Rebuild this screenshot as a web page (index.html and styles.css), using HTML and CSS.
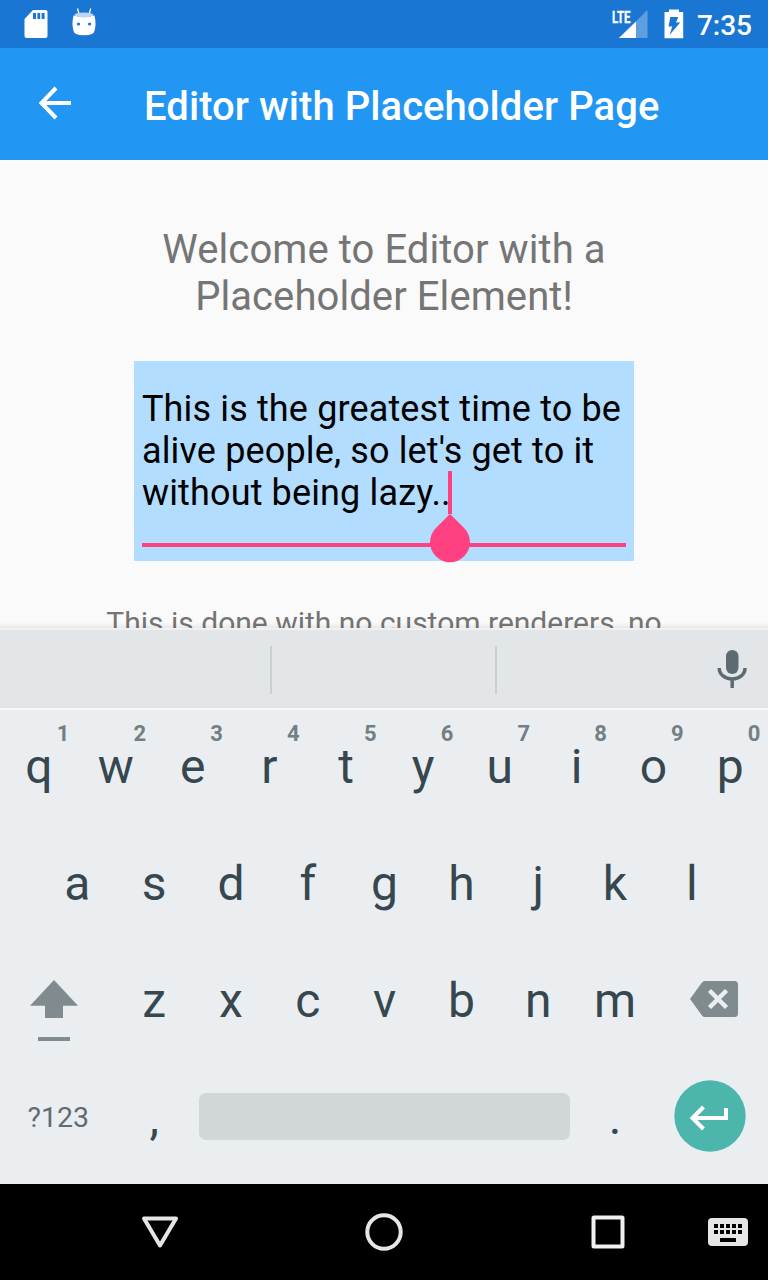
FILE: index.html
```html
<!DOCTYPE html>
<html lang="en">
<head>
<meta charset="utf-8">
<title>Editor with Placeholder Page</title>
<link rel="stylesheet" href="styles.css">
</head>
<body>
<div class="screen">
  <div class="status-bar">
    <svg class="sd-icon" width="24" height="30" viewBox="0 0 24 30"><path fill="#fff" fill-rule="evenodd" d="M9 1h12.500a2 2 0 0 1 2 2v24a2 2 0 0 1-2 2H2.500a2 2 0 0 1-2-2V10ZM9 4v6h3V4ZM13.400 4v6h2.800V4ZM17.600 4v6h3V4Z"/></svg>
    <svg class="robot-icon" width="24" height="28" viewBox="0 0 24 28"><path d="M5.500 -.5 7 5M18.700 -.5 17.200 5" stroke="#fff" stroke-width="1.300" fill="none"/><path fill="#fff" d="M1.500 6.500Q12 9 22.500 6.500Q24.500 15 22.500 22Q21.500 26.300 12 26.300T1.500 22Q-.5 15 1.500 6.500Z"/><ellipse cx="12" cy="6" rx="9.500" ry="2.500" fill="#bcd6f3"/><circle cx="6.500" cy="15" r="1.600" fill="#1976d2"/><circle cx="17.600" cy="15" r="1.600" fill="#1976d2"/></svg>
    <span class="spacer"></span>
    <svg class="signal-icon" width="36" height="30" viewBox="0 0 36 30"><path fill="#5e9fe0" d="M35.500 1v28H7Z"/><path fill="#fff" d="M24 12.500v16.500H7Z"/><text class="lte" x="0" y="13.500" textLength="18.500" lengthAdjust="spacingAndGlyphs">LTE</text></svg>
    <svg class="battery-icon" width="20" height="30" viewBox="0 0 20 30"><path fill="#fff" d="M5 .500h10V3h4.200v26.300H.5V3H5Z"/><path fill="#1976d2" d="M6.300 8h8l-2.300 5.500h4.200L5.500 26 8.300 17.500H4.500Z"/></svg>
    <span class="clock">7:35</span>
  </div>

  <div class="app-bar">
    <svg class="back-icon" width="34" height="34" viewBox="0 0 34 34"><path d="M33 17H4M18 2 3.500 17 18 32" fill="none" stroke="#fff" stroke-width="4"/></svg>
    <h1 class="title">Editor with Placeholder Page</h1>
  </div>

  <main class="content">
    <p class="welcome">Welcome to Editor with a<br>Placeholder Element!</p>
    <div class="editor">
      <p class="editor-text">This is the greatest time to be<br>alive people, so let's get to it<br>without being lazy..<span class="caret"></span></p>
      <div class="underline"></div>
      <svg class="handle" width="40" height="48" viewBox="0 0 40 48"><path fill="#ff4081" d="M20 0 34.100 14A20 20 0 1 1 5.900 14Z"/></svg>
    </div>
    <p class="note">This is done with no custom renderers, no</p>
    <div class="content-shade"></div>
  </main>

  <div class="suggestions">
    <span class="slot"></span><span class="slot slot-mid"></span>
    <span class="slot slot-mic"><svg width="30" height="40" viewBox="0 0 30 40"><rect x="9" y="0" width="12.500" height="24" rx="6.200" fill="#5c6b72"/><path d="M2.200 18C2.200 24.500 8 29 15.200 29S28 24.500 28 18M15.200 29v9" fill="none" stroke="#5c6b72" stroke-width="3.500"/></svg></span>
  </div>

  <div class="keyboard">
    <div class="row">
      <span class="key">q<i class="hint">1</i></span><span class="key">w<i class="hint">2</i></span><span class="key">e<i class="hint">3</i></span><span class="key">r<i class="hint">4</i></span><span class="key">t<i class="hint">5</i></span><span class="key">y<i class="hint">6</i></span><span class="key">u<i class="hint">7</i></span><span class="key">i<i class="hint">8</i></span><span class="key">o<i class="hint">9</i></span><span class="key">p<i class="hint">0</i></span>
    </div>
    <div class="row">
      <span class="key">a</span><span class="key">s</span><span class="key">d</span><span class="key">f</span><span class="key">g</span><span class="key">h</span><span class="key">j</span><span class="key">k</span><span class="key">l</span>
    </div>
    <div class="row">
      <span class="key wide shift"><svg width="48" height="62" viewBox="0 0 48 62"><path fill="#808b8f" d="M24 0 48 25.700H33V38H15V25.700H0ZM8 57h32v4H8Z"/></svg></span><span class="key">z</span><span class="key">x</span><span class="key">c</span><span class="key">v</span><span class="key">b</span><span class="key">n</span><span class="key">m</span><span class="key wide delete"><svg width="48" height="36" viewBox="0 0 48 36"><path fill="#808b8f" d="M15 0H44.500Q48 0 48 3.500V32.500Q48 36 44.500 36H15Q13 36 12 34.500L0 18 12 1.500Q13 0 15 0Z"/><path d="M19.500 9.500 36.500 26.500M36.500 9.500 19.500 26.500" stroke="#ebeef1" stroke-width="4.500"/></svg></span>
    </div>
    <div class="row">
      <span class="key wide symbols">?123</span><span class="key">,</span><span class="key space"><span class="space-bar"></span></span><span class="key">.</span><span class="key wide enter"><svg width="72" height="72" viewBox="0 0 72 72"><circle cx="36" cy="36" r="35.700" fill="#4db6ac"/><path d="M52 28v10H18.500M29.500 27 18.500 38 29.500 49" fill="none" stroke="#fff" stroke-width="4"/></svg></span>
    </div>
  </div>

  <div class="nav-bar">
    <span class="nav-item"><svg width="38" height="34" viewBox="0 0 38 34"><path d="M3 3.500H35L19 30.500Z" fill="none" stroke="#e6e6e6" stroke-width="4" stroke-linejoin="round"/></svg></span>
    <span class="nav-item"><svg width="38" height="38" viewBox="0 0 38 38"><circle cx="19" cy="19" r="16.700" fill="none" stroke="#e6e6e6" stroke-width="4"/></svg></span>
    <span class="nav-item"><svg width="34" height="34" viewBox="0 0 34 34"><rect x="2.500" y="2.500" width="29" height="29" rx=".5" fill="none" stroke="#f0f0f0" stroke-width="4" stroke-linejoin="round"/></svg></span>
    <svg class="ime-icon" width="40" height="28" viewBox="0 0 40 28"><rect width="40" height="28" rx="4" fill="#e6e6e6"/><path d="M6 8H34M6 14H34" stroke="#000" stroke-width="4" stroke-dasharray="4 2"/><path d="M12 20h16v4H12Z"/></svg>
  </div>
</div>
</body>
</html>
```
FILE: styles.css
```css
* { box-sizing: border-box; }
body, h1, p { margin: 0; }
body { font-family: Roboto, "Liberation Sans", sans-serif; }
svg { display: block; flex: none; overflow: visible; }

.screen {
  width: 768px;
  height: 1280px;
  display: flex;
  flex-direction: column;
  overflow: hidden;
  background: #fafafa;
}

.status-bar {
  flex: none;
  height: 48px;
  display: flex;
  align-items: flex-start;
  padding: 9px 16px 0 24px;
  background: #1976d2;
}
.robot-icon { margin-left: 24px; }
.spacer { flex: 1; }
.lte { font: bold 17px Roboto, sans-serif; fill: #fff; stroke: #fff; stroke-width: .3px; }
.battery-icon { margin-left: 16px; }
.clock {
  margin-left: 13px;
  font-size: 28px;
  font-weight: 500;
  line-height: 33px;
  color: #fff;
}

.app-bar {
  flex: none;
  height: 112px;
  display: flex;
  align-items: center;
  padding-left: 38px;
  background: #2196f3;
}
.back-icon { margin-bottom: 2px; }
.title {
  margin: 6px 0 0 72px;
  font-size: 40px;
  font-weight: 500;
  line-height: 48px;
  letter-spacing: .06px;
  color: #fff;
  white-space: nowrap;
}

.content {
  position: relative;
  flex: none;
  height: 470px;
  padding-top: 66px;
  overflow: hidden;
}
.welcome {
  font-size: 40px;
  line-height: 47px;
  letter-spacing: .08px;
  text-align: center;
  color: #757575;
}
.editor {
  position: relative;
  width: 500px;
  height: 200px;
  margin: 41px auto 0;
  padding: 27px 8px 0;
  background: #b3ddff;
}
.editor-text {
  font-size: 36px;
  line-height: 42px;
  letter-spacing: .14px;
  color: #000;
  white-space: nowrap;
}
.caret {
  position: absolute;
  left: 314px;
  top: 110px;
  width: 4px;
  height: 43px;
  background: #ff4081;
}
.underline {
  height: 4px;
  margin-top: 29px;
  background: #ff4081;
}
.handle {
  position: absolute;
  left: 296px;
  top: 153px;
}
.note {
  margin-top: 44px;
  font-size: 30px;
  line-height: 36px;
  text-align: center;
  color: #757575;
  white-space: nowrap;
}
.content-shade {
  position: absolute;
  left: 0;
  right: 0;
  bottom: 0;
  height: 8px;
  border-bottom: 2px solid #f0f1f2;
  background: linear-gradient(rgba(0, 0, 0, 0), rgba(0, 0, 0, .07));
}

.suggestions {
  flex: none;
  height: 78px;
  padding-top: 2px;
  display: grid;
  grid-template-columns: 270px 225px 273px;
  align-items: center;
  background: #e2e6e9;
}
.slot { height: 48px; }
.slot-mid, .slot-mic { border-left: 2px solid #cacfd2; }
.slot-mic {
  display: flex;
  align-items: center;
  justify-content: flex-end;
  padding-right: 21.500px;
}

.keyboard {
  flex: none;
  height: 476px;
  border-top: 2px solid #f6f8f9;
  background: #ebeef1;
}
.row {
  height: 117px;
  display: flex;
  justify-content: center;
}
.row:first-child { height: 115px; }
.row:first-child .key { padding-bottom: 1px; }
.key {
  position: relative;
  width: 76.8px;
  display: flex;
  align-items: center;
  justify-content: center;
  padding-left: 1.200px;
  font-size: 48px;
  line-height: 56px;
  color: #37474f;
}
.hint {
  position: absolute;
  top: 11px;
  right: 7.500px;
  font-size: 22px;
  font-weight: 700;
  font-style: normal;
  line-height: 26px;
  color: #737f84;
}
.wide { width: 115.2px; }
.shift { padding: 20px 7px 0 0; }
.delete { padding: 0 0 4px 8px; }
.symbols { font-size: 28.500px; color: #5f6c72; }
.space { width: 384px; padding: 0 0 3px; }
.space-bar {
  width: 371px;
  height: 47px;
  border-radius: 7px;
  background: #d1d6d9;
}
.enter { padding: 0 0 4px; }

.nav-bar {
  position: relative;
  flex: none;
  height: 96px;
  display: grid;
  grid-template-columns: repeat(3, 224px);
  justify-content: center;
  align-items: center;
  background: #000;
}
.nav-item { display: flex; justify-content: center; }
.ime-icon {
  position: absolute;
  right: 20px;
  top: 34px;
}
```
